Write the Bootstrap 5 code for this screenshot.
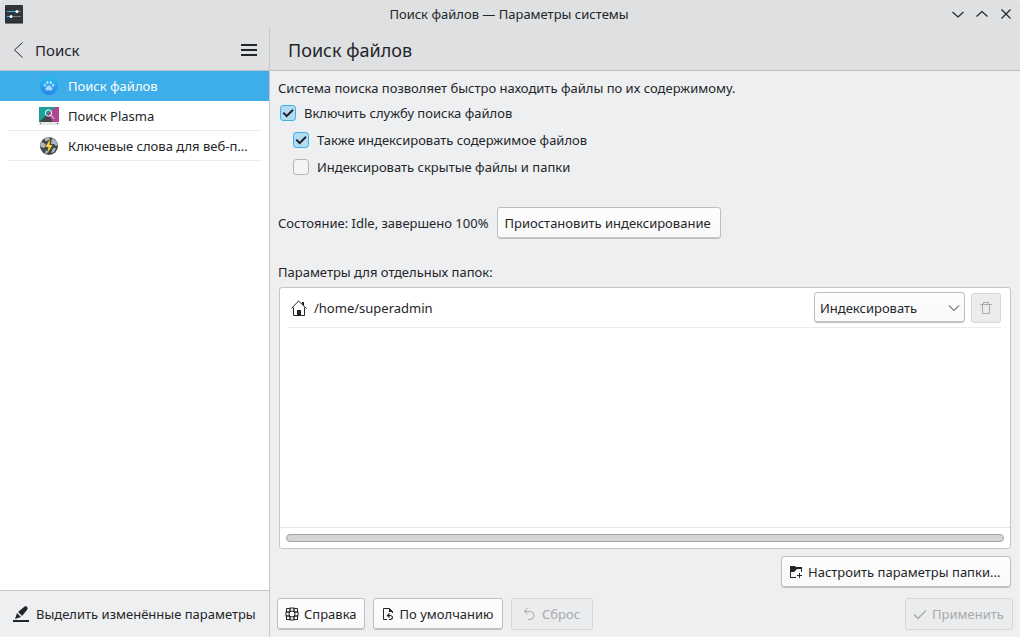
<!DOCTYPE html>
<html lang="ru">
<head>
<meta charset="utf-8">
<meta name="viewport" content="width=device-width, initial-scale=1">
<title>Поиск файлов — Параметры системы</title>
<link href="https://cdn.jsdelivr.net/npm/bootstrap@5.3.0/dist/css/bootstrap.min.css" rel="stylesheet">
<style>
body { font-family: "Noto Sans", sans-serif; font-size: 13px; line-height: 18px; color: #232629; background: #eeeff1; }
svg { flex: none; }
.titlebar { height: 28px; background: #dee0e2; border-radius: 4px 4px 0 0; }
.titlebar .app-icon, .titlebar .window-buttons { flex: 1 1 0; }
.titlebar .window-buttons { padding-right: 6px; }
.plain { background: none; border: 0; padding: 0; display: flex; color: inherit; }
.pane-head { height: 43px; padding: 2px 8px 0; background: #dee0e2; border-bottom: 1px solid #bdbfc1; }
.sidebar { width: 270px; border-right: 1px solid #c6c8ca; background: #fff; }
.sidebar h2 { font-size: 15px; line-height: 20px; font-weight: 400; padding-left: 5px; }
.content h1 { font-size: 18px; line-height: 24px; font-weight: 400; padding-left: 10px; }
.module { height: 30px; padding-left: 39px; gap: 9px; color: #232629; text-decoration: none; position: relative; }
.module:not(.active)::after { content: ""; position: absolute; left: 8px; right: 7px; bottom: 0; border-bottom: 1px solid #ebecec; }
.module.active { background: #3daee9; color: #fcfcfc; }
.side-foot { height: 47px; background: #eeeff1; border-top: 1px solid #c6c8ca; padding-left: 12px; }
.options { padding: 2px 0 0 2px; }
.option { height: 27px; gap: 8px; }
.option.nested { padding-left: 13px; }
.form-check-input { width: 16px; height: 16px; margin: 0; background-color: #f3f4f5; border: 1px solid #b3b5b6; border-radius: 3px; }
.option .form-check-input:checked { background-color: #b3dbf1; border-color: #3daee9; background-size: 14px 14px; background-image: url("data:image/svg+xml,%3csvg xmlns='http://www.w3.org/2000/svg' viewBox='0 0 14 14'%3e%3cpath d='M2.2 6.6 5.7 10 12 3.7' fill='none' stroke='%23232629' stroke-width='2'/%3e%3c/svg%3e"); }
.status { padding-top: 27px; gap: 9px; }
.btn { --bs-btn-font-size: 13px; --bs-btn-line-height: 18px; --bs-btn-padding-x: 6px; --bs-btn-padding-y: 6px; --bs-btn-border-radius: 3px; --bs-btn-color: #232629; --bs-btn-border-color: #bcbebf; --bs-btn-disabled-color: #a8aaab; --bs-btn-disabled-border-color: #d5d6d8; --bs-btn-disabled-opacity: 1; height: 32px; padding-right: 7px; white-space: nowrap; display: inline-flex; align-items: center; gap: 4px; background: linear-gradient(#fdfdfd, #f9f9fa); box-shadow: inset 0 -1px 0 #c4c6c7; }
.btn:disabled { background: #ebecee; box-shadow: none; }
.btn.pause { min-width: 224px; }
.btn.configure { min-width: 230px; }
.btn.defaults { min-width: 130px; }
.btn.reset { min-width: 82px; justify-content: center; }
.btn.apply { min-width: 108px; }
.folders { background: #fff; border: 1px solid #c3c5c6; border-radius: 3px; margin: 6px 0 7px 1px; }
.folder { height: 40px; margin: 0 9px 0 8px; border-bottom: 1px solid #ebecec; padding-left: 3px; }
.folder .path { padding-left: 7px; }
.folder .form-select { width: 151px; height: 31px; padding: 0 24px 0 5px; font-size: 13px; line-height: 18px; color: #232629; border: 1px solid #bcbebf; border-radius: 3px; box-shadow: inset 0 -1px 0 #c4c6c7; background: url("data:image/svg+xml,%3csvg xmlns='http://www.w3.org/2000/svg' viewBox='0 0 12 8'%3e%3cpath d='M1 1.5 6 6.5 11 1.5' fill='none' stroke='%23232629'/%3e%3c/svg%3e") no-repeat right 4px center / 12px 8px, linear-gradient(#fdfdfd, #f9f9fa); }
.folder .btn { width: 30px; height: 30px; justify-content: center; padding: 0; margin-left: 6px; }
.scroll-row { height: 21px; border-top: 1px solid #e4e5e6; padding: 6px; }
.scroll-thumb { height: 8px; border: 1px solid #a3a4a5; border-radius: 4px; background: #d5d5d5; }
.page-pad { padding: 8px 9px 7px 8px; }
.foot-buttons { margin: 10px -2px 0 -1px; gap: 8px; }
</style>
</head>
<body>
<div class="d-flex flex-column vh-100">
  <header class="titlebar d-flex align-items-center">
    <div class="app-icon ps-1"><svg width="20" height="20" viewBox="0 0 20 20"><rect x="1" y="1" width="18" height="18" rx="1" fill="#2f353a"/><path d="M1 19h18" stroke="#1b1f22"/><path d="M3 7.500h9M3 12.500h3" stroke="#3daee9"/><path d="M14 7.500h3M8 12.500h9" stroke="#777c80"/><circle cx="13" cy="7.500" r="1.500" fill="#fff"/><circle cx="7" cy="12.500" r="1.500" fill="#fff"/></svg></div>
    <div>Поиск файлов — Параметры системы</div>
    <div class="window-buttons d-flex justify-content-end gap-2">
      <button class="plain" aria-label="Свернуть"><svg width="16" height="16" fill="none" stroke="#232629" stroke-width="1.200"><path d="M2.500 6L8 11l5.500-5"/></svg></button>
      <button class="plain" aria-label="Развернуть"><svg width="16" height="16" fill="none" stroke="#232629" stroke-width="1.200"><path d="M2.500 10.500l5.500-5 5.500 5"/></svg></button>
      <button class="plain" aria-label="Закрыть"><svg width="16" height="16" fill="none" stroke="#232629" stroke-width="1.200"><path d="M3.500 3.500l9 9M12.500 3.500l-9 9"/></svg></button>
    </div>
  </header>
  <div class="d-flex flex-grow-1">
    <aside class="sidebar d-flex flex-column flex-shrink-0">
      <div class="pane-head d-flex align-items-center">
        <button class="plain" aria-label="Назад"><svg width="22" height="22" fill="none" stroke="#232629"><path d="M14.500 3.500L6.500 11l8 7.500"/></svg></button>
        <h2 class="mb-0 flex-grow-1">Поиск</h2>
        <button class="plain me-1" aria-label="Меню"><svg width="16" height="16" stroke="#232629" stroke-width="2"><path d="M0 3h16M0 8h16M0 13h16"/></svg></button>
      </div>
      <nav class="flex-grow-1">
        <a href="#" class="module active d-flex align-items-center">
          <svg width="20" height="20" viewBox="0 0 20 20"><defs><linearGradient id="blue" x2="0" y2="1"><stop stop-color="#22bdf4"/><stop offset="1" stop-color="#2583e9"/></linearGradient></defs><circle cx="10" cy="10" r="9" fill="url(#blue)"/><g fill="#a9d8fa"><ellipse cx="5.800" cy="9.200" rx="1.200" ry="1.700" transform="rotate(-25 5.800 9.200)"/><ellipse cx="8.300" cy="6.600" rx="1.200" ry="1.800"/><ellipse cx="11.700" cy="6.600" rx="1.200" ry="1.800"/><ellipse cx="14.200" cy="9.200" rx="1.200" ry="1.700" transform="rotate(25 14.200 9.200)"/><path d="M10 9.500c1.800 0 2.500 1.800 3.300 2.800.8 1.200-.2 2.500-1.600 2.200-1.100-.3-2.300-.3-3.400 0-1.400.3-2.400-1-1.600-2.200.8-1 1.500-2.800 3.300-2.800z"/></g></svg>
          <span>Поиск файлов</span></a>
        <a href="#" class="module d-flex align-items-center">
          <svg width="20" height="20" viewBox="0 0 20 20"><path d="M0 1h20v15H0z" fill="#1aa29a"/><path d="M20 1v15h-7L8 8.500 16.500 1z" fill="#b0468c"/><path d="M0 16 8.500 8 14 16z" fill="#43484d"/><path d="M0 16h20v3H0z" fill="#e4e6e7"/><path d="M1 17.500h1M18 17.500h1" stroke="#555"/><circle cx="9.500" cy="7" r="3.200" fill="none" stroke="#fff"/><path d="M11.800 9.300l3.400 3.400" stroke="#fff"/></svg>
          <span>Поиск Plasma</span></a>
        <a href="#" class="module d-flex align-items-center">
          <svg width="20" height="20" viewBox="0 0 20 20"><circle cx="10" cy="10" r="9" fill="#42474c"/><path d="M6 2l4-1 1 2-3 2-2 0zM2 6l3 1 2 2-2 3-3-1-1-2zM13 2l4 3 2 4-2 1-2-2-3 0zM7 14l2 1-1 3-2-1zM14 12l3 0-2 4-3 1z" fill="#b0b5b9"/><path d="M11 3 6.500 11H9.500l-1 6 5-8h-3z" fill="#ffd43c"/></svg>
          <span>Ключевые слова для веб-п...</span></a>
      </nav>
      <div class="side-foot d-flex align-items-center">
        <button class="plain align-items-center gap-1"><svg width="20" height="18" viewBox="0 0 20 18" fill="#232629"><path d="M1 15h16v2H1zM3 14l2-6 4 4zM6 7l6-5c2-2 5 1 3 3l-5 6z"/><path d="M5.500 7l5 5" stroke="#eeeff1" stroke-width=".6"/></svg><span>Выделить изменённые параметры</span></button>
      </div>
    </aside>
    <main class="content flex-grow-1 d-flex flex-column">
      <div class="pane-head d-flex align-items-center"><h1 class="mb-0">Поиск файлов</h1></div>
      <div class="page-pad d-flex flex-column flex-grow-1">
        <p class="mb-0">Система поиска позволяет быстро находить файлы по их содержимому.</p>
        <div class="options">
          <div class="option d-flex align-items-center"><input class="form-check-input" type="checkbox" id="enable" checked><label for="enable">Включить службу поиска файлов</label></div>
          <div class="option nested d-flex align-items-center"><input class="form-check-input" type="checkbox" id="contents" checked><label for="contents">Также индексировать содержимое файлов</label></div>
          <div class="option nested d-flex align-items-center"><input class="form-check-input" type="checkbox" id="hidden"><label for="hidden">Индексировать скрытые файлы и папки</label></div>
        </div>
        <div class="status d-flex align-items-center">
          <span>Состояние: Idle, завершено 100%</span>
          <button class="btn pause">Приостановить индексирование</button>
        </div>
        <div class="pt-4">Параметры для отдельных папок:</div>
        <div class="folders d-flex flex-column flex-grow-1">
          <div class="folder d-flex align-items-center">
            <svg width="16" height="16" viewBox="0 0 16 16" fill="none" stroke="#232629"><path d="M.5 8.500 7.500 1 15.500 8.500M2.500 7.500v8h11v-8M12.500 2v3.500"/><path d="M6 10h4v6H6zM11 2h2v3h-2z" fill="#232629" stroke="none"/></svg>
            <span class="path flex-grow-1">/home/superadmin</span>
            <select class="form-select" aria-label="Режим индексирования"><option>Индексировать</option><option>Не индексировать</option></select>
            <button class="btn" disabled aria-label="Удалить"><svg width="16" height="16" fill="none" stroke="#a8aaab"><path d="M2 4.500h12M5.500 4V2.500h5V4M4.500 5v8.500h7V5"/></svg></button>
          </div>
          <div class="scroll-row mt-auto"><div class="scroll-thumb"></div></div>
        </div>
        <div class="d-flex justify-content-end">
          <button class="btn configure"><svg width="16" height="16" viewBox="0 0 16 16"><path d="M2 2h5l1 1h6v5h-1V5H9L6 8H3v5h5v1H2z" fill="#232629"/><path d="M9 11.500h5M11.500 9v5" stroke="#232629"/></svg>Настроить параметры папки...</button>
        </div>
        <div class="foot-buttons d-flex">
          <button class="btn"><svg width="16" height="16" viewBox="0 0 16 16" fill="none" stroke="#232629"><path d="M2.500 5V2.500H5L6 2h4l1 .5h2.500V5l.5 1v4l-.5 1v2.500H11l-1 .5H6l-1-.5H2.500V11L2 10V6z"/><circle cx="8" cy="8" r="3"/><path d="M6 2v4M10 2v4M6 10v4M10 10v4M2 6h4M2 10h4M10 6h4M10 10h4" stroke-width="1.400"/></svg>Справка</button>
          <button class="btn defaults"><svg width="16" height="16" viewBox="0 0 16 16" fill="none" stroke="#232629"><path d="M7 13.500H3.500v-11h6l3 3V7"/><path d="M9 2v4h4z" fill="#232629" stroke="none"/><path d="M9.500 7.500 7.500 9.500l2 2M7.500 9.500h3q2 .5 2 2t-2 2H9" stroke-width="1.200"/></svg>По умолчанию</button>
          <button class="btn reset" disabled><svg width="16" height="16" viewBox="0 0 16 16" fill="none" stroke="#a8aaab"><path d="M5.500 2 2.500 5.500l3 3M2.500 5.500H8a4 4 0 0 1 0 8H6"/></svg>Сброс</button>
          <button class="btn apply ms-auto" disabled><svg width="16" height="16" fill="none" stroke="#a8aaab" stroke-width="1.300"><path d="M2 8.500 6 12.500 14 4.500"/></svg>Применить</button>
        </div>
      </div>
    </main>
  </div>
</div>
<script src="https://cdn.jsdelivr.net/npm/bootstrap@5.3.0/dist/js/bootstrap.bundle.min.js"></script>
</body>
</html>
